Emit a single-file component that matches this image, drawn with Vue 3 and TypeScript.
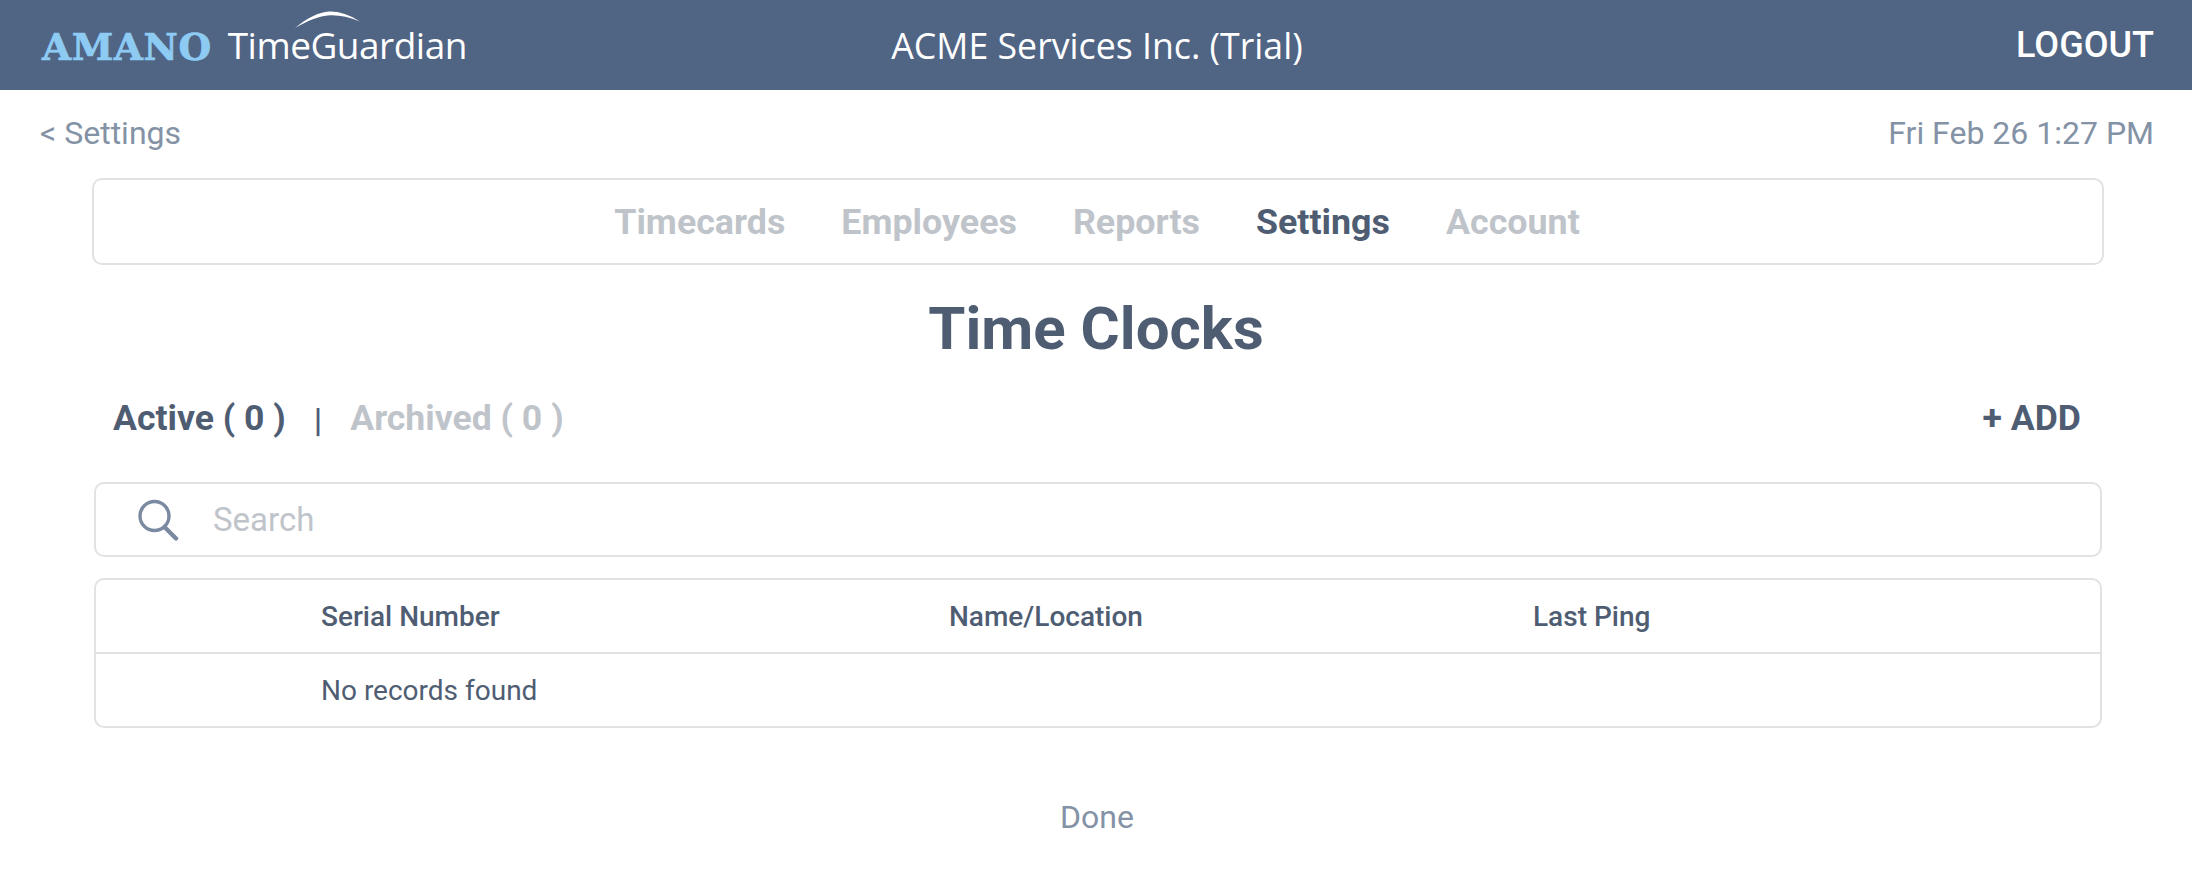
<script setup lang="ts">
const navItems: { label: string; active?: boolean }[] = [
  { label: 'Timecards' },
  { label: 'Employees' },
  { label: 'Reports' },
  { label: 'Settings', active: true },
  { label: 'Account' },
]
</script>

<template>
  <div class="page">
    <header class="topbar">
      <div class="logo">
        <span class="amano">AMANO</span>
        <span class="tg">
          TimeGuardian
          <svg class="arc" width="70" height="20" viewBox="0 0 70 20">
            <path d="M2 18 C14 8 26 2 36 1.5 C46 1.2 56 4.5 67 11.5 C56 7 46 4.8 37 5.2 C26 5.8 14 11 2 18 Z" fill="#fff" />
          </svg>
        </span>
      </div>
      <div class="company">ACME Services Inc. (Trial)</div>
      <div class="logout">LOGOUT</div>
    </header>

    <div class="subbar">
      <span>&lt; Settings</span>
      <span>Fri Feb 26 1:27 PM</span>
    </div>

    <nav class="mainnav">
      <span v-for="item in navItems" :key="item.label" :class="['navitem', { active: item.active }]">{{ item.label }}</span>
    </nav>

    <h1 class="title">Time Clocks</h1>

    <div class="tabs">
      <div class="tabs-left">
        <span class="tab on">Active ( 0 )</span>
        <span class="sep">|</span>
        <span class="tab">Archived ( 0 )</span>
      </div>
      <span class="add">+ ADD</span>
    </div>

    <div class="search">
      <svg class="search-icon" width="42" height="42" viewBox="0 0 42 42" fill="none" stroke="#7b8aa0" stroke-width="3.4">
        <circle cx="17.5" cy="17" r="14.5" />
        <path d="M27.5 28 L39 39.5" stroke-linecap="round" stroke-width="4.4" />
      </svg>
      <span class="placeholder">Search</span>
    </div>

    <div class="table">
      <div class="row head">
        <span>Serial Number</span>
        <span>Name/Location</span>
        <span>Last Ping</span>
      </div>
      <div class="row body">
        <span>No records found</span>
      </div>
    </div>

    <div class="done">Done</div>
  </div>
</template>

<style>
body { background: #fff; }
</style>

<style scoped>
.page {
  width: 2192px;
  height: 875px;
  overflow: hidden;
  font-family: Roboto, "Liberation Sans", sans-serif;
  color: #4f5d73;
  background: #fff;
}
.topbar {
  height: 90px;
  background: #506484;
  color: #fff;
  display: grid;
  grid-template-columns: 1fr auto 1fr;
  align-items: center;
  padding: 0 38px 0 42px;
}
.logo { display: flex; align-items: baseline; gap: 16px; }
.amano {
  font-family: "DejaVu Serif", serif;
  font-weight: 700;
  font-size: 37.5px;
  line-height: 44px;
  letter-spacing: 0.6px;
  color: #8ecbf3;
  -webkit-text-stroke: 0.7px #8ecbf3;
  transform: translateY(1px);
}
.tg {
  position: relative;
  font-family: "Open Sans", sans-serif;
  font-size: 37px;
  line-height: 44px;
  letter-spacing: -0.5px;
}
.arc { position: absolute; left: 65px; top: -13px; }
.company {
  font-family: "Open Sans", sans-serif;
  font-size: 35.7px;
  text-align: center;
  padding-right: 2px;
}
.logout {
  text-align: right;
  font-size: 36px;
  font-weight: 500;
}
.subbar {
  display: flex;
  justify-content: space-between;
  padding: 21px 38px 0 40px;
  font-size: 32px;
  line-height: 44px;
  color: #8492a6;
}
.mainnav {
  margin: 23px 88px 0 92px;
  height: 87px;
  box-sizing: border-box;
  border: 2px solid #e2e2e2;
  border-radius: 10px;
  display: flex;
  justify-content: center;
  align-items: center;
  gap: 56px;
  font-size: 35.8px;
  line-height: 44px;
  font-weight: 700;
  color: #bfc4ca;
  padding: 1px 2px 0 0;
}
.navitem.active { color: #4f5d73; }
.title {
  margin: 30px 0 0;
  text-align: center;
  font-size: 60px;
  line-height: 68px;
  font-weight: 700;
}
.tabs {
  margin: 33px 111px 0 113px;
  display: flex;
  justify-content: space-between;
  align-items: center;
  font-size: 35.6px;
  line-height: 44px;
  font-weight: 700;
}
.tabs-left { display: flex; align-items: center; gap: 28px; }
.tab { color: #bfc4ca; }
.tab.on { color: #4f5d73; }
.sep { font-size: 34px; line-height: 34px; font-weight: 500; margin-top: 4px; }
.search {
  margin: 42px 90px 0 94px;
  height: 75px;
  box-sizing: border-box;
  border: 2px solid #e2e2e2;
  border-radius: 10px;
  display: flex;
  align-items: center;
  padding-left: 41px;
  gap: 34px;
}
.search-icon { flex: none; }
.placeholder { font-size: 33px; color: #bfc4ca; }
.table {
  margin: 21px 90px 0 94px;
  box-sizing: border-box;
  border: 2px solid #e2e2e2;
  border-radius: 10px;
}
.row {
  height: 72px;
  display: grid;
  grid-template-columns: 628px 584px 1fr;
  align-items: center;
  padding-left: 225px;
  font-size: 28px;
}
.row.head {
  border-bottom: 2px solid #e2e2e2;
  font-weight: 500;
}
.done {
  margin-top: 67px;
  padding-left: 2px;
  text-align: center;
  font-size: 32px;
  line-height: 44px;
  color: #8492a6;
}
</style>
